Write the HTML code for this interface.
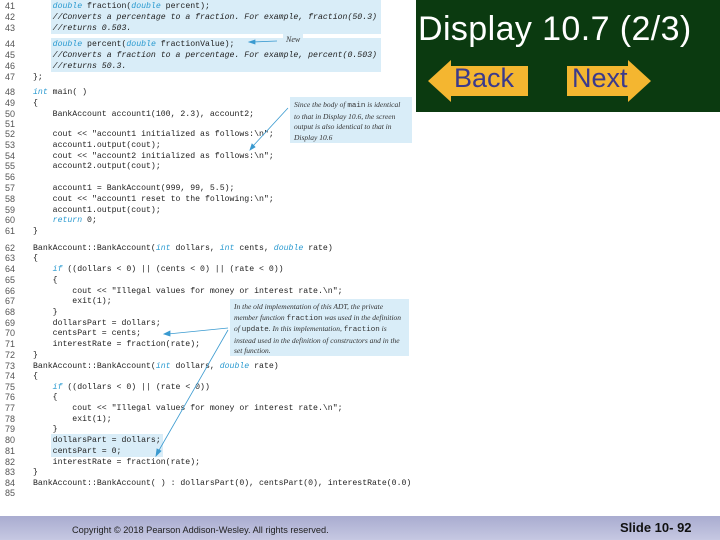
<!DOCTYPE html>
<html><head><meta charset="utf-8"><style>
body{margin:0;width:720px;height:540px;position:relative;background:#fff;overflow:hidden;font-family:"Liberation Sans",sans-serif}
.l{position:absolute;font:8.2px/11px "Liberation Mono",monospace;color:#222;white-space:pre}
.n{position:absolute;left:5px;font:9px/11px "Liberation Sans",sans-serif;color:#555}
.k{color:#2a9ad0;font-style:italic}
.c{font-style:italic}
.hl{position:absolute;background:#d9edf8}
.box{position:absolute;background:#d9edf8;font:italic 7.5px/10.5px "Liberation Serif",serif;color:#333;padding:3px 4px;box-sizing:border-box}
.box span{font-style:normal;font-family:"Liberation Mono",monospace}
</style></head><body>
<div class="hl" style="left:51px;top:0;width:330px;height:34px"></div>
<div class="hl" style="left:51px;top:38px;width:330px;height:34px"></div>
<div class="hl" style="left:51px;top:434px;width:112px;height:23px"></div>

<div id="code"></div>
<script>
var L=[[41,6,"    <span class=k>double</span> fraction(<span class=k>double</span> percent);"],
[42,17,"    <span class=c>//Converts a percentage to a fraction. For example, fraction(50.3)</span>"],
[43,28,"    <span class=c>//returns 0.503.</span>"],
[44,44,"    <span class=k>double</span> percent(<span class=k>double</span> fractionValue);"],
[45,55,"    <span class=c>//Converts a fraction to a percentage. For example, percent(0.503)</span>"],
[46,66,"    <span class=c>//returns 50.3.</span>"],
[47,77,"};"],
[48,92,"<span class=k>int</span> main( )"],
[49,103,"{"],
[50,114,"    BankAccount account1(100, 2.3), account2;"],
[51,124,""],
[52,134,"    cout << \"account1 initialized as follows:\\n\";"],
[53,145,"    account1.output(cout);"],
[54,156,"    cout << \"account2 initialized as follows:\\n\";"],
[55,166,"    account2.output(cout);"],
[56,177,""],
[57,188,"    account1 = BankAccount(999, 99, 5.5);"],
[58,199,"    cout << \"account1 reset to the following:\\n\";"],
[59,210,"    account1.output(cout);"],
[60,220,"    <span class=k>return</span> 0;"],
[61,231,"}"],
[62,248,"BankAccount::BankAccount(<span class=k>int</span> dollars, <span class=k>int</span> cents, <span class=k>double</span> rate)"],
[63,258,"{"],
[64,269,"    <span class=k>if</span> ((dollars < 0) || (cents < 0) || (rate < 0))"],
[65,280,"    {"],
[66,291,"        cout << \"Illegal values for money or interest rate.\\n\";"],
[67,301,"        exit(1);"],
[68,312,"    }"],
[69,323,"    dollarsPart = dollars;"],
[70,333,"    centsPart = cents;"],
[71,344,"    interestRate = fraction(rate);"],
[72,355,"}"],
[73,366,"BankAccount::BankAccount(<span class=k>int</span> dollars, <span class=k>double</span> rate)"],
[74,376,"{"],
[75,387,"    <span class=k>if</span> ((dollars < 0) || (rate < 0))"],
[76,397,"    {"],
[77,408,"        cout << \"Illegal values for money or interest rate.\\n\";"],
[78,419,"        exit(1);"],
[79,429,"    }"],
[80,440,"    dollarsPart = dollars;"],
[81,451,"    centsPart = 0;"],
[82,462,"    interestRate = fraction(rate);"],
[83,472,"}"],
[84,483,"BankAccount::BankAccount( ) : dollarsPart(0), centsPart(0), interestRate(0.0)"],
[85,493,""]];
var h="";L.forEach(function(a){var t=a[1]-5;h+='<div class=n style="top:'+t+'px">'+a[0]+'</div><div class=l style="left:33px;top:'+t+'px">'+a[2]+'</div>';});
document.getElementById("code").innerHTML=h;
</script>

<div style="position:absolute;left:283px;top:34px;font:italic 8px 'Liberation Serif',serif;background:#d9edf8;padding:1px 3px;color:#333">New</div>
<div class="box" style="left:290px;top:97px;width:122px;height:46px">Since the body of <span>main</span> is identical to that in Display 10.6, the screen output is also identical to that in Display 10.6</div>
<div class="box" style="left:230px;top:299px;width:179px;height:57px">In the old implementation of this ADT, the private member function <span>fraction</span> was used in the definition of <span>update</span>. In this implementation, <span>fraction</span> is instead used in the definition of constructors and in the set function.</div>
<svg style="position:absolute;left:0;top:0" width="720" height="540">
<g stroke="#3a9ad0" fill="#3a9ad0" stroke-width="0.8">
<line x1="277" y1="41" x2="252" y2="42"/><path d="M249 42 l6 -2 l0 4z"/>
<line x1="288" y1="108" x2="253" y2="146"/><path d="M250 150 l2 -6 l3 3z"/>
<line x1="228" y1="328" x2="168" y2="334"/><path d="M164 334 l6 -3 l0 5z"/>
<line x1="228" y1="330" x2="158" y2="452"/><path d="M156 456 l1 -7 l4 2z"/>
</g></svg>

<div style="position:absolute;left:416px;top:0;width:304px;height:112px;background:#0b3a10"></div>
<div style="position:absolute;left:418px;top:9px;font-size:34px;letter-spacing:0.4px;color:#fff;line-height:40px">Display 10.7 (2/3)</div>
<svg style="position:absolute;left:416px;top:56px" width="304" height="50">
<path d="M12 25 L35 4 L35 10 L112 10 L112 40 L35 40 L35 46Z" fill="#f4b630"/>
<path d="M151 10 L212 10 L212 4 L235 25 L212 46 L212 40 L151 40Z" fill="#f4b630"/>
</svg>
<div style="position:absolute;left:454px;top:63px;font-size:27px;color:#3b3a8c">Back</div>
<div style="position:absolute;left:572px;top:63px;font-size:27px;color:#3b3a8c">Next</div>

<div style="position:absolute;left:0;top:516px;width:720px;height:24px;background:linear-gradient(#a9acd0,#c6c8e2)"></div>
<div style="position:absolute;left:72px;top:525px;font-size:9.2px;color:#222">Copyright © 2018 Pearson Addison-Wesley. All rights reserved.</div>
<div style="position:absolute;left:620px;top:520px;font-size:13px;font-weight:bold;color:#111">Slide 10- 92</div>
</body></html>
